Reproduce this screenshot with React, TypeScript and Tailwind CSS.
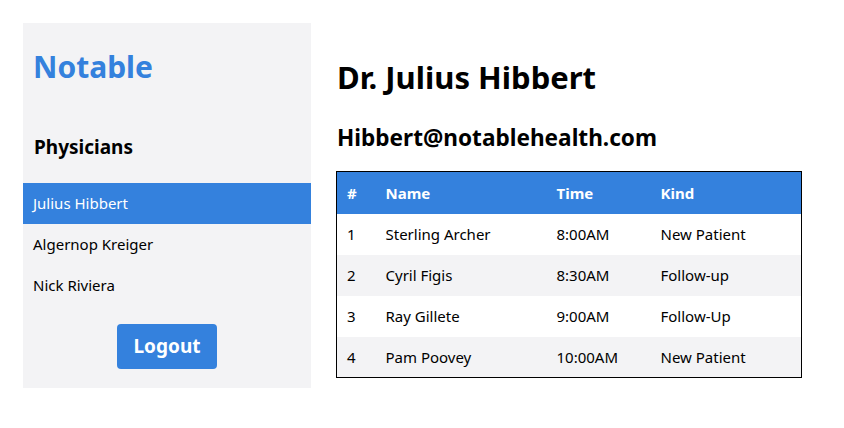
import React from "react";

const rows = [
  { n: 1, name: "Sterling Archer", time: "8:00AM", kind: "New Patient" },
  { n: 2, name: "Cyril Figis", time: "8:30AM", kind: "Follow-up" },
  { n: 3, name: "Ray Gillete", time: "9:00AM", kind: "Follow-Up" },
  { n: 4, name: "Pam Poovey", time: "10:00AM", kind: "New Patient" },
];

export default function App() {
  return (
    <div
      className="flex items-start bg-white text-black w-[844px] h-[428px] pt-[23px] pl-[23px]"
      style={{ fontFamily: '"Noto Sans", "Open Sans", sans-serif' }}
    >
      <aside className="w-[288px] bg-[#f3f3f5] pt-[24px] pb-[19px] flex flex-col">
        <h1 className="px-[10px] text-[30px] leading-[40px] font-bold text-[#3481dd]">Notable</h1>
        <h2 className="mt-[46px] px-[11px] text-[19px] leading-[28px] font-bold">Physicians</h2>
        <ul className="mt-[22px] flex flex-col">
          <li className="h-[41px] flex items-center px-[10px] bg-[#3481dd] text-white text-[15px]">Julius Hibbert</li>
          <li className="h-[41px] flex items-center px-[10px] text-[15px]">Algernop Kreiger</li>
          <li className="h-[41px] flex items-center px-[10px] text-[15px]">Nick Riviera</li>
        </ul>
        <div className="mt-[18px] flex justify-center">
          <button className="w-[100px] h-[45px] rounded-[4px] bg-[#3481dd] text-white text-[19px] font-bold">
            Logout
          </button>
        </div>
      </aside>
      <main className="ml-[25px] pt-[34px] flex flex-col">
        <h1 className="text-[31px] leading-[40px] font-bold pl-[1px]">Dr. Julius Hibbert</h1>
        <h2 className="mt-[25px] text-[22.6px] leading-[32px] font-bold pl-[1px]">Hibbert@notablehealth.com</h2>
        <table className="mt-[17px] w-[466px] border border-black border-collapse text-[15px]">
          <thead>
            <tr className="bg-[#3481dd] text-white h-[42px] font-bold">
              <th className="text-left pl-[10px] w-[49px] font-bold">#</th>
              <th className="text-left w-[171px] font-bold">Name</th>
              <th className="text-left w-[104px] font-bold">Time</th>
              <th className="text-left font-bold">Kind</th>
            </tr>
          </thead>
          <tbody>
            {rows.map((r, i) => (
              <tr key={r.n} className={`h-[41px] ${i % 2 === 1 ? "bg-[#f3f3f5]" : "bg-white"}`}>
                <td className="pl-[10px]">{r.n}</td>
                <td>{r.name}</td>
                <td>{r.time}</td>
                <td>{r.kind}</td>
              </tr>
            ))}
          </tbody>
        </table>
      </main>
    </div>
  );
}
